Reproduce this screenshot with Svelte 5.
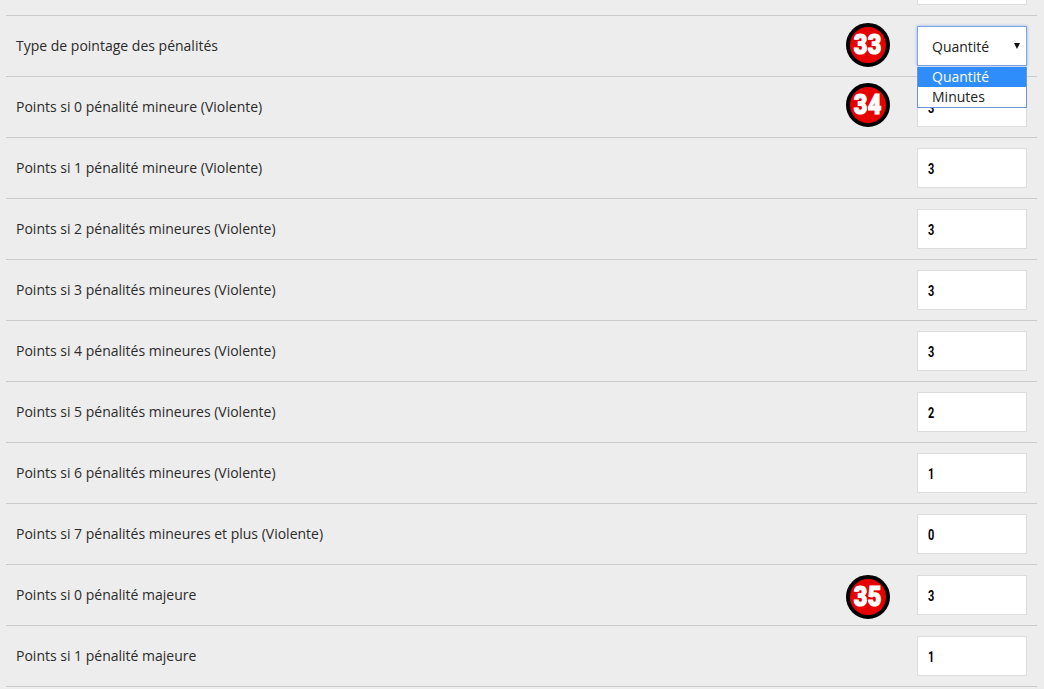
<script>
  const rows = [
    { label: '', value: '3' },
    { label: 'Type de pointage des pénalités', badge: 33, nudge: -1, select: true },
    { label: 'Points si 0 pénalité mineure (Violente)', value: '3', badge: 34, nudge: -2 },
    { label: 'Points si 1 pénalité mineure (Violente)', value: '3' },
    { label: 'Points si 2 pénalités mineures (Violente)', value: '3' },
    { label: 'Points si 3 pénalités mineures (Violente)', value: '3' },
    { label: 'Points si 4 pénalités mineures (Violente)', value: '3' },
    { label: 'Points si 5 pénalités mineures (Violente)', value: '2' },
    { label: 'Points si 6 pénalités mineures (Violente)', value: '1' },
    { label: 'Points si 7 pénalités mineures et plus (Violente)', value: '0' },
    { label: 'Points si 0 pénalité majeure', value: '3', badge: 35, nudge: 2 },
    { label: 'Points si 1 pénalité majeure', value: '1' }
  ];
</script>

<div class="page">
  <div class="list">
    {#each rows as row}
      <div class="row">
        <span class="label">{row.label}</span>
        {#if row.badge}
          <span class="badge" style:top="{row.nudge}px"><b>{row.badge}</b></span>
        {/if}
        {#if row.select}
          <div class="select">
            <div class="control">
              <span>Quantité</span>
              <i class="arrow"></i>
            </div>
            <ul class="menu">
              <li class="active">Quantité</li>
              <li>Minutes</li>
            </ul>
          </div>
        {:else}
          <div class="input"><span>{row.value}</span></div>
        {/if}
      </div>
    {/each}
  </div>
</div>

<style>
  :global(body) {
    margin: 0;
    background: #ededed;
  }
  .page {
    height: 689px;
    overflow: hidden;
    padding: 0 7px 0 6px;
    font-family: 'Open Sans', sans-serif;
    font-size: 14px;
    color: #2b2b2b;
  }
  .list {
    margin-top: -45px;
  }
  .row {
    position: relative;
    display: flex;
    align-items: center;
    box-sizing: border-box;
    height: 61px;
    padding: 0 10px;
    border-bottom: 1px solid #ccc;
  }
  .label {
    flex: 1;
    position: relative;
    top: -1px;
  }
  .badge {
    display: flex;
    align-items: center;
    justify-content: center;
    box-sizing: border-box;
    width: 44px;
    height: 44px;
    margin-right: 27px;
    border: 4.5px solid #000;
    border-radius: 50%;
    background: #e60000;
    position: relative;
    z-index: 1;
  }
  .badge b {
    color: #fff;
    font-family: 'Roboto', sans-serif;
    font-size: 28px;
    font-weight: 900;
    line-height: 1;
    letter-spacing: 0.5px;
    -webkit-text-stroke: 1.2px #fff;
    transform: scaleX(0.84);
  }
  .input {
    box-sizing: border-box;
    display: flex;
    align-items: center;
    width: 110px;
    height: 40px;
    padding: 2px 10px 0;
    border: 1px solid #ddd;
    background: #fff;
    color: #000;
    font-family: 'Roboto', sans-serif;
    font-size: 14px;
    font-weight: 700;
  }
  .input span {
    transform: scaleX(0.78);
    transform-origin: left center;
  }
  .select {
    position: relative;
    z-index: 2;
    width: 110px;
  }
  .control {
    box-sizing: border-box;
    display: flex;
    align-items: center;
    justify-content: space-between;
    height: 40px;
    padding: 1px 6px 0 14px;
    border: 1px solid #7ea6e0;
    box-shadow: 0 0 3px #8fb4ea;
    background: #fff;
    color: #222;
  }
  .arrow {
    width: 0;
    height: 0;
    margin-top: -2px;
    border: 3.5px solid transparent;
    border-top: 6px solid #111;
    border-bottom: 0;
  }
  .menu {
    position: absolute;
    top: 41px;
    left: 0;
    right: 0;
    box-sizing: border-box;
    margin: 0;
    padding: 0;
    list-style: none;
    background: #fff;
    border: 1px solid #6f94d8;
    border-top: 0;
    color: #222;
  }
  .menu li {
    height: 20px;
    line-height: 20px;
    padding-left: 14px;
  }
  .menu .active {
    background: #2e8dfb;
    color: #fff;
  }
</style>
